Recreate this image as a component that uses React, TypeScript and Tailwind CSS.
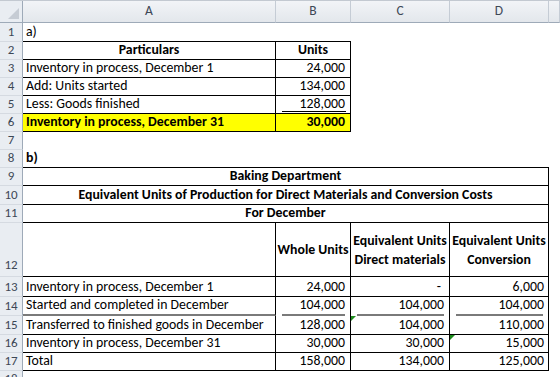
import React from "react";

/////////////////////////////////////////////////////////////////
// feuille Excel : unités équivalentes (Baking Department)

const font = { fontFamily: "Carlito, Calibri, Lato, 'Liberation Sans', sans-serif" };

type CellProps = {
  className?: string;
  middle?: boolean;
  children?: React.ReactNode;
};

function RowHead({ n, className = "" }: { n: number | string; className?: string }) {
  return (
    <div
      className={`flex items-end justify-center border-r border-b border-r-[#9eaab8] border-b-[#d5dae1] bg-[#e9edf2] pb-[1px] text-[13px] leading-[16px] text-[#3d4856] ${className}`}
    >
      {n}
    </div>
  );
}

function Cell({ className = "", middle = false, children }: CellProps) {
  return (
    <div
      className={`flex ${middle ? "items-center" : "items-end pb-[1px]"} overflow-visible whitespace-nowrap px-[3px] text-[13.8px] leading-[16px] text-black ${className}`}
    >
      {children}
    </div>
  );
}

function Num({ className = "", pr = "pr-[5px]", children }: CellProps & { pr?: string }) {
  return <Cell className={`justify-end ${pr} ${className}`}>{children}</Cell>;
}

function ErrMark() {
  return (
    <span className="absolute left-0 top-0 h-0 w-0 border-r-[5px] border-t-[5px] border-r-transparent border-t-[#1e8c1e]" />
  );
}

// soulignement comptable (ne touche pas les bords de la cellule)
function Underline() {
  return <span className="absolute bottom-0 left-[6px] right-[5px] h-[2px] bg-[#7a7a7a]" />;
}

export default function App() {
  const rows = "22px 19px 18px 18px 18px 18px 18px 18px 18px 18px 19px 18px 54px 20px 19px 19px 18px 18px 18px";
  const box = "border-b border-r border-black";

  return (
    <div className="h-[377px] w-[560px] overflow-hidden bg-white" style={font}>
      <div className="h-[1px] bg-[#c3c9d1]" />
      <div className="grid grid-cols-[23px_253px_75px_99px_99px_11px]" style={{ gridTemplateRows: rows }}>
        {/* en-têtes de colonnes */}
        <div className="relative border-r border-b border-[#9eaab8] bg-[#e9edf2]">
          <span className="absolute bottom-[3px] right-[3px] h-0 w-0 border-b-[11px] border-l-[11px] border-b-[#c6ccd4] border-l-transparent" />
        </div>
        {["A", "B", "C", "D", ""].map((c, i) => (
          <div
            key={i}
            className="flex items-center justify-center border-r border-b border-r-[#c5ccd5] border-b-[#9eaab8] bg-gradient-to-b from-[#f2f4f7] to-[#e3e7ec] text-[13.5px] text-[#3d4856]"
          >
            {c}
          </div>
        ))}

        {/* 1 */}
        <RowHead n={1} />
        <Cell className="border-b border-black">a)</Cell>
        <Cell className="border-b border-black" />
        <Cell />
        <Cell />
        <Cell />

        {/* 2 */}
        <RowHead n={2} />
        <Cell className={`justify-center font-bold ${box}`}>Particulars</Cell>
        <Cell className={`justify-center font-bold ${box}`}>Units</Cell>
        <Cell />
        <Cell />
        <Cell />

        {/* 3 */}
        <RowHead n={3} />
        <Cell className={`text-[#4a4a4a] ${box}`}>Inventory in process, December 1</Cell>
        <Num className={box}>24,000</Num>
        <Cell />
        <Cell />
        <Cell />

        {/* 4 */}
        <RowHead n={4} />
        <Cell className={box}>Add: Units started</Cell>
        <Num className={box}>134,000</Num>
        <Cell />
        <Cell />
        <Cell />

        {/* 5 */}
        <RowHead n={5} />
        <Cell className={`text-[#4a4a4a] ${box}`}>Less: Goods finished</Cell>
        <Num className={`relative ${box}`}>
          128,000
          <span className="absolute bottom-[1px] left-[6px] right-[4px] h-[1px] bg-black" />
        </Num>
        <Cell />
        <Cell />
        <Cell />

        {/* 6 */}
        <RowHead n={6} />
        <Cell className={`bg-[#ffff00] font-bold ${box}`}>Inventory in process, December 31</Cell>
        <Num className={`bg-[#ffff00] font-bold ${box}`}>30,000</Num>
        <Cell />
        <Cell />
        <Cell />

        {/* 7 */}
        <RowHead n={7} />
        <Cell />
        <Cell />
        <Cell />
        <Cell />
        <Cell />

        {/* 8 */}
        <RowHead n={8} />
        <Cell className="border-b border-black font-bold">b)</Cell>
        <Cell className="border-b border-black" />
        <Cell className="border-b border-black" />
        <Cell className="border-b border-black" />
        <Cell />

        {/* 9-11 titres fusionnés */}
        <RowHead n={9} />
        <Cell className={`col-span-4 justify-center font-bold ${box}`}>Baking Department</Cell>
        <Cell />
        <RowHead n={10} />
        <Cell className={`col-span-4 justify-center font-bold ${box}`}>
          Equivalent Units of Production for Direct Materials and Conversion Costs
        </Cell>
        <Cell />
        <RowHead n={11} />
        <Cell className={`col-span-4 justify-center font-bold ${box}`}>For December</Cell>
        <Cell />

        {/* 12 en-têtes */}
        <RowHead n={12} className="pb-[3px]" />
        <Cell className={box} />
        <Cell middle className={`justify-center font-bold ${box}`}>Whole Units</Cell>
        <Cell middle className={`justify-center px-0 text-center font-bold ${box}`}>
          <div className="leading-[19px]">
            Equivalent Units
            <br />
            Direct materials
          </div>
        </Cell>
        <Cell middle className={`justify-center px-0 text-center font-bold ${box}`}>
          <div className="leading-[19px]">
            Equivalent Units
            <br />
            Conversion
          </div>
        </Cell>
        <Cell />

        {/* 13 */}
        <RowHead n={13} />
        <Cell className={box}>Inventory in process, December 1</Cell>
        <Num className={box}>24,000</Num>
        <Num className={box} pr="pr-[8px]">-</Num>
        <Num className={box} pr="pr-[4px]">6,000</Num>
        <Cell />

        {/* 14 */}
        <RowHead n={14} />
        <Cell className="border-b-2 border-r border-b-[#7a7a7a] border-r-black">Started and completed in December</Cell>
        <Num className="relative border-r border-black pb-[3px]">
          104,000
          <Underline />
        </Num>
        <Num className="relative border-r border-black pb-[3px]">
          104,000
          <Underline />
        </Num>
        <Num className="relative border-r border-black pb-[3px]" pr="pr-[4px]">
          104,000
          <Underline />
        </Num>
        <Cell />

        {/* 15 */}
        <RowHead n={15} />
        <Cell className={box}>Transferred to finished goods in December</Cell>
        <Num className={box}>128,000</Num>
        <Num className={`relative ${box}`}>
          <ErrMark />
          104,000
        </Num>
        <Num className={box} pr="pr-[4px]">110,000</Num>
        <Cell />

        {/* 16 */}
        <RowHead n={16} />
        <Cell className={box}>Inventory in process, December 31</Cell>
        <Num className={box}>30,000</Num>
        <Num className={box}>30,000</Num>
        <Num className={`relative ${box}`} pr="pr-[4px]">
          <ErrMark />
          15,000
        </Num>
        <Cell />

        {/* 17 */}
        <RowHead n={17} />
        <Cell className={box}>Total</Cell>
        <Num className={box}>158,000</Num>
        <Num className={box}>134,000</Num>
        <Num className={box} pr="pr-[4px]">125,000</Num>
        <Cell />

        {/* 18 */}
        <RowHead n={18} />
        <Cell />
        <Cell />
        <Cell />
        <Cell />
        <Cell />
      </div>
    </div>
  );
}
